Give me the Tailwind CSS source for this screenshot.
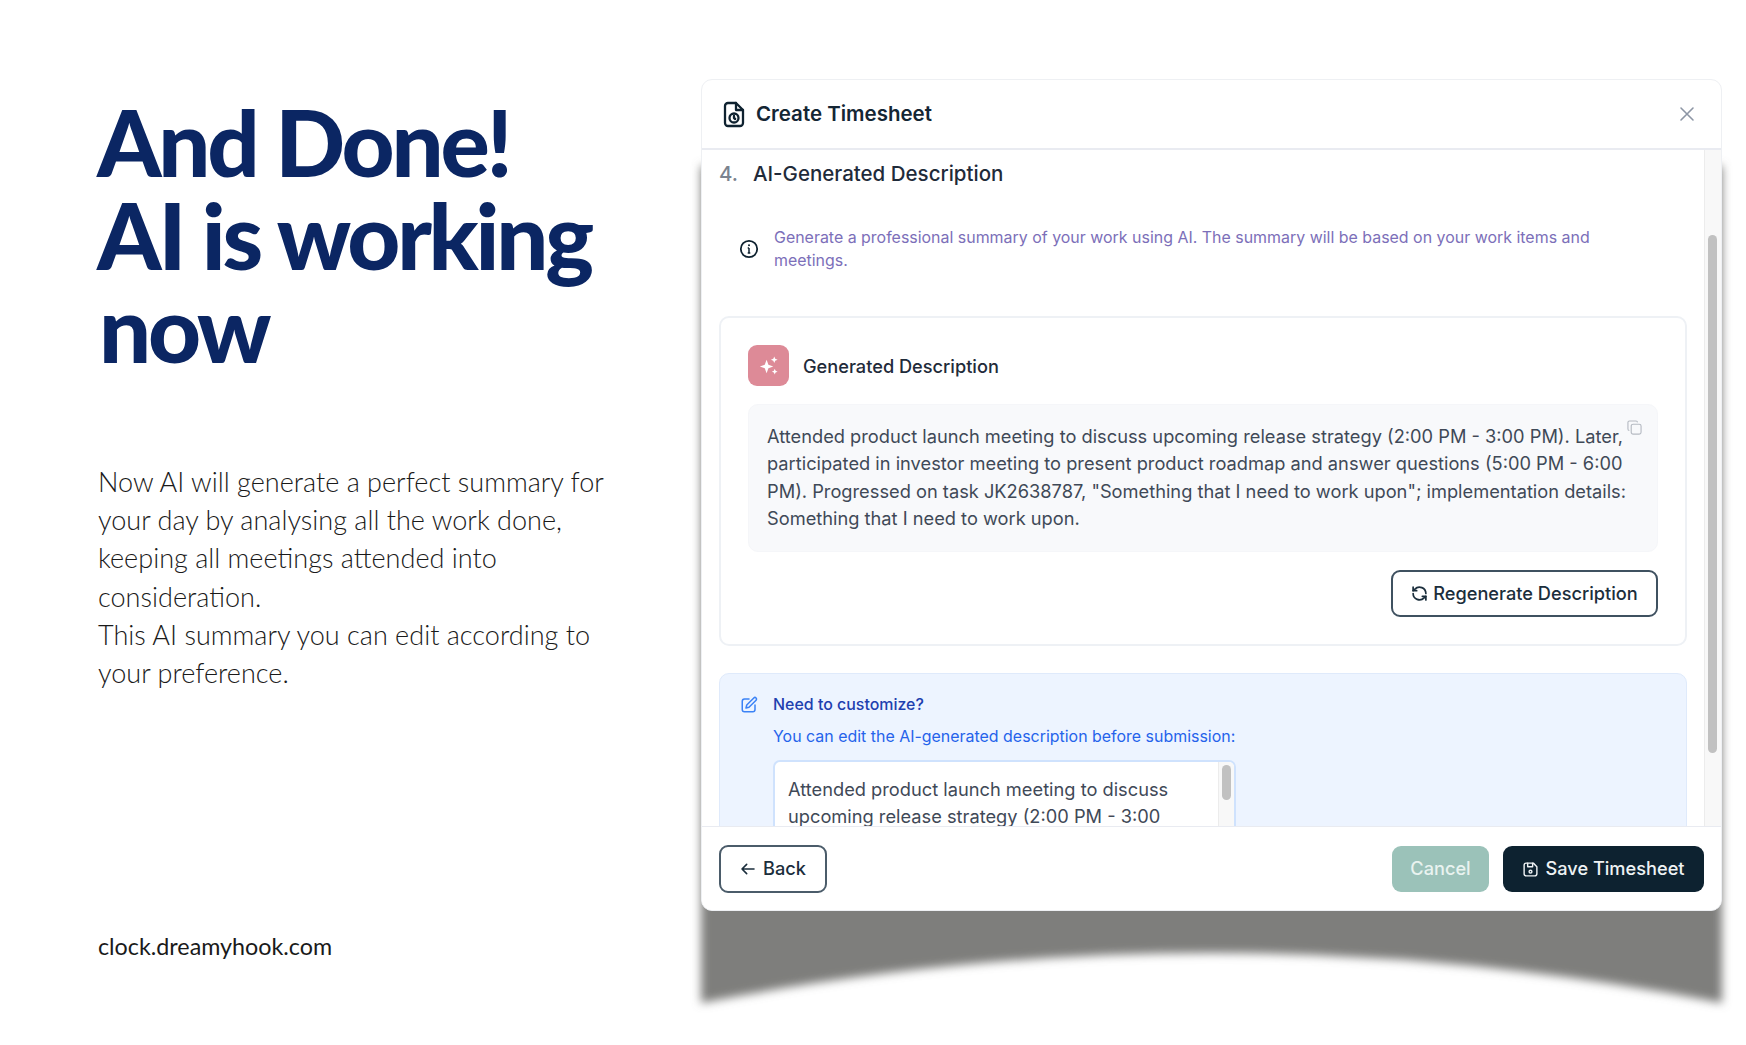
<!DOCTYPE html>
<html lang="en">
<head>
<meta charset="utf-8">
<title>And Done!</title>
<script src="https://cdn.jsdelivr.net/npm/@tailwindcss/browser@4"></script>
</head>
<body class="bg-white">
<div class="relative flex h-[1045px] w-[1746px] overflow-hidden bg-white">
  <!-- Left column -->
  <div class="flex w-[701px] shrink-0 flex-col pl-[97px] font-['Lato',sans-serif]">
    <h1 class="mt-[95px] text-[92px] font-black leading-[93px] tracking-[-3.2px] text-[#0b2663]">And Done!<br>AI is working<br><span class="ml-[2px]">now</span></h1>
    <p class="mt-[89px] ml-px text-[27.05px] font-light leading-[38.2px] text-[#1a1a1a]">Now AI will generate a perfect summary for<br>your day by analysing all the work done,<br>keeping all meetings attended into<br>consideration.<br>This AI summary you can edit according to<br>your preference.</p>
    <p class="mt-[239px] ml-px text-[23.3px] leading-[30px] text-[#1a1a1a]">clock.dreamyhook.com</p>
  </div>

  <!-- Shadow under the modal -->
  <svg class="absolute left-[679px] top-[150px]" width="1067" height="895" viewBox="0 0 1067 895" aria-hidden="true">
    <defs><filter id="soft" x="-5%" y="-5%" width="110%" height="110%"><feGaussianBlur stdDeviation="5"></feGaussianBlur></filter></defs>
    <path d="M22 16 H1043 V853 Q532 753 22 853 Z" fill="#7e7e7c" filter="url(#soft)"></path>
  </svg>

  <!-- Modal -->
  <div class="relative mt-[79px] flex h-[832px] w-[1021px] flex-col self-start overflow-hidden rounded-[11px] border border-[#eef0f3] bg-white font-['Inter',sans-serif]">
    <header class="flex h-[70px] shrink-0 items-center justify-between border-b-2 border-[#e9ebf1] pl-[20px] pr-[24px]">
      <div class="flex items-center gap-[10px]">
        <svg class="h-[27px] w-[24px] text-[#0f2230]" viewBox="0 0 24 27" fill="none" stroke="currentColor" stroke-width="2.300" stroke-linecap="round" stroke-linejoin="round"><path d="M14 2H6a3 3 0 0 0-3 3v17a3 3 0 0 0 3 3h12a3 3 0 0 0 3-3V9z"></path><path d="M14 2v7h7"></path><circle cx="12" cy="17" r="4.500"></circle><path d="M12 15v2l1.200 1"></path></svg>
        <h2 class="text-[20.5px] font-semibold leading-[28px] text-[#142634]">Create Timesheet</h2>
      </div>
      <svg class="h-[20px] w-[20px] text-[#8d96a5]" viewBox="0 0 20 20" fill="none" stroke="currentColor" stroke-width="1.6" stroke-linecap="round"><path d="M4 4l12 12M16 4L4 16"></path></svg>
    </header>

    <div class="flex min-h-0 flex-1">
      <main class="min-w-0 flex-1 overflow-hidden px-[17px]">
        <div class="flex h-[47px] items-center gap-[15px] text-[20.5px] font-medium leading-[28px]">
          <span class="text-[#7b838f]">4.</span>
          <span class="text-[#1f2b3a]">AI-Generated Description</span>
        </div>
        <div class="mt-[29px] flex items-center gap-[15px] pl-[20px]">
          <svg class="h-[20px] w-[20px] shrink-0 text-[#0f2230]" viewBox="0 0 20 20" fill="none" stroke="currentColor"><circle cx="10" cy="10" r="8.2" stroke-width="1.8"></circle><path d="M10 9v5M8.7 9H10M8.7 14h2.6" stroke-width="1.5"></path><circle cx="10" cy="6.2" r="1" fill="currentColor" stroke="none"></circle></svg>
          <p class="text-[15.95px] leading-[23px] text-[#7c6fb9]">Generate a professional summary of your work using AI. The summary will be based on your work items and<br>meetings.</p>
        </div>

        <section class="mt-[44px] h-[330px] rounded-[10px] border-2 border-[#eef1f5] px-[27px] pt-[27px]">
          <div class="flex items-center gap-[14px]">
            <div class="flex h-[41px] w-[41px] items-center justify-center rounded-[9px] bg-[#dd8a97]">
              <svg class="h-[23px] w-[23px] text-white" viewBox="0 0 24 24" fill="currentColor"><path d="M10 6l1.9 5.1L17 13l-5.1 1.9L10 20l-1.9-5.1L3 13l5.1-1.9z"></path><path d="M18 2.5l1 2.5 2.5 1-2.5 1-1 2.5-1-2.5-2.5-1 2.5-1z"></path><path d="M18.500 15.500l.9 2.100 2.100.9-2.100.9-.9 2.100-.9-2.100-2.100-.9 2.100-.9z"></path></svg>
            </div>
            <h3 class="text-[18.2px] font-medium leading-[26px] text-[#1f2b3a]">Generated Description</h3>
          </div>
          <div class="relative mt-[18px] h-[148px] rounded-[10px] border border-[#f5f6f9] bg-[#f8f9fb] pl-[18px] pt-[18px]">
            <p class="whitespace-nowrap text-[18.25px] leading-[27.3px] text-[#3f4957]">Attended product launch meeting to discuss upcoming release strategy (2:00 PM - 3:00 PM). Later,<br>participated in investor meeting to present product roadmap and answer questions (5:00 PM - 6:00<br>PM). Progressed on task JK2638787, "Something that I need to work upon"; implementation details:<br>Something that I need to work upon.</p>
            <svg class="absolute right-[15px] top-[15px] h-[15px] w-[15px] text-[#b5bac2]" viewBox="0 0 16 16" fill="none" stroke="currentColor" stroke-width="1.2" stroke-linejoin="round"><rect x="4.500" y="4.500" width="10.500" height="10.500" rx="2"></rect><path d="M2.500 11.200A1.600 1.600 0 0 1 1 9.600V2.600A1.600 1.600 0 0 1 2.600 1h7a1.600 1.600 0 0 1 1.600 1.500"></path></svg>
          </div>
          <div class="mt-[18px] flex justify-end">
            <button class="flex h-[47px] w-[267px] items-center justify-center gap-[5px] rounded-[9px] border-2 border-[#3f5160] text-[18.2px] font-medium text-[#1b2e3c]">
              <svg class="h-[17px] w-[17px]" viewBox="0 0 24 24" fill="none" stroke="currentColor" stroke-width="2.400" stroke-linecap="round" stroke-linejoin="round"><path d="M21 12a9 9 0 0 0-15.500-6.200L3 8"></path><path d="M3 3v5h5"></path><path d="M3 12a9 9 0 0 0 15.500 6.200L21 16"></path><path d="M16 16h5v5"></path></svg>
              Regenerate Description
            </button>
          </div>
        </section>

        <section class="mt-[27px] h-[300px] rounded-[10px] border border-[#dfeafb] bg-[#edf4ff] pl-[20px] pt-[19px]">
          <div class="flex items-start gap-[15px]">
            <svg class="mt-[3px] h-[18px] w-[18px] shrink-0 text-[#3b82f6]" viewBox="0 0 24 24" fill="none" stroke="currentColor" stroke-width="2" stroke-linecap="round" stroke-linejoin="round"><path d="M12 4H6a3 3 0 0 0-3 3v11a3 3 0 0 0 3 3h11a3 3 0 0 0 3-3v-6"></path><path d="M18.400 2.600a2.100 2.100 0 1 1 3 3L12 15l-4 1 1-4z"></path></svg>
            <div class="w-[463px]">
              <h4 class="text-[15.95px] font-medium leading-[23px] text-[#1e40af]">Need to customize?</h4>
              <p class="mt-[9px] whitespace-nowrap text-[15.95px] leading-[23px] text-[#2563eb]">You can edit the AI-generated description before submission:</p>
              <div class="mt-[12px] flex h-[140px] overflow-hidden rounded-[7px] border-2 border-[#cfe2fd] bg-white">
                <p class="min-w-0 flex-1 pl-[13px] pt-[14px] text-[18.25px] leading-[27.3px] text-[#3f4957]">Attended product launch meeting to discuss<br>upcoming release strategy (2:00 PM - 3:00</p>
                <div class="w-[16px] shrink-0 border-l border-[#ececec] bg-[#f8f8f8] px-[3px] pt-[3px]"><div class="h-[35px] rounded-full bg-[#c1c1c1]"></div></div>
              </div>
            </div>
          </div>
        </section>
      </main>
      <div class="w-[17px] shrink-0 border-l border-[#ececec] bg-[#f8f8f8] pl-[3px] pr-[4px] pt-[85px]"><div class="h-[518px] rounded-full bg-[#c1c1c1]"></div></div>
    </div>

    <footer class="relative flex h-[84px] shrink-0 items-start justify-between border-t border-[#e9ebf1] bg-white pl-[17px] pr-[17px] pt-[18px]">
      <button class="flex h-[48px] w-[108px] items-center justify-center gap-[7px] rounded-[9px] border-2 border-[#4b5c6a] text-[18.2px] font-medium text-[#1b2e3c]">
        <svg class="h-[16px] w-[16px]" viewBox="0 0 24 24" fill="none" stroke="currentColor" stroke-width="2.400" stroke-linecap="round" stroke-linejoin="round"><path d="M21 12H3M10 5l-7 7 7 7"></path></svg>
        Back
      </button>
      <div class="flex gap-[14px] pt-px">
        <button class="h-[46px] w-[97px] rounded-[9px] bg-[#9bc2b9] text-[18.2px] font-medium text-[#e9f3f0]">Cancel</button>
        <button class="flex h-[46px] w-[201px] items-center justify-center gap-[6px] rounded-[9px] bg-[#0d2230] text-[18.2px] font-medium text-[#eef2f4]">
          <svg class="h-[17px] w-[17px]" viewBox="0 0 24 24" fill="none" stroke="currentColor" stroke-width="2" stroke-linecap="round" stroke-linejoin="round"><path d="M6 3h10l5 5v10a3 3 0 0 1-3 3H6a3 3 0 0 1-3-3V6a3 3 0 0 1 3-3z"></path><path d="M8 3v5h7V3"></path><circle cx="12" cy="15" r="2"></circle></svg>
          Save Timesheet
        </button>
      </div>
    </footer>
  </div>
</div>
</body>
</html>
